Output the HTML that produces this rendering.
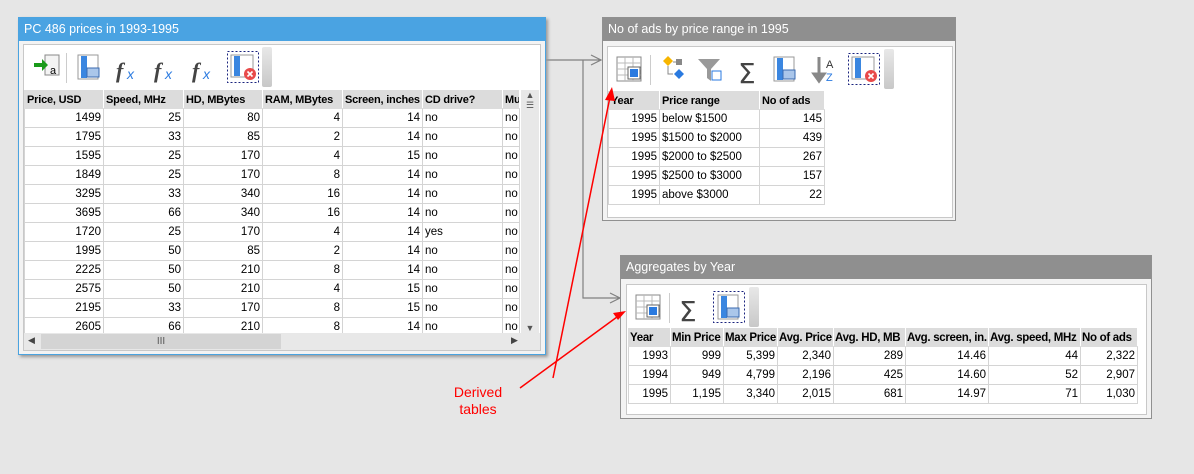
<!DOCTYPE html>
<html><head><meta charset="utf-8"><style>
*{box-sizing:border-box;margin:0;padding:0}
body{width:1194px;height:474px;background:#e6e6e6;font-family:"Liberation Sans",sans-serif;font-size:11.5px;color:#000;position:relative;overflow:hidden}
.abs{position:absolute}
.win{position:absolute;background:#f3f3f3;border:1px solid #a0a0a0}
.title{position:absolute;left:0;right:0;top:0;height:23px;color:#fff;font-size:12.5px;line-height:22px;padding-left:5px}
.inner{position:absolute;background:#fff;border:1px solid #c8c8c8}
table{border-collapse:collapse;position:absolute;table-layout:fixed}
td,th{border:1px solid #d4d4d4;height:19px;padding:0 2px;white-space:nowrap;overflow:hidden;font-weight:normal}
th{background:#dcdcdc;font-weight:bold;text-align:left;height:18px;border-color:#dcdcdc #fff #dcdcdc #dcdcdc;font-size:11px;letter-spacing:-0.2px}
.agg th{font-size:11.5px;letter-spacing:-0.3px;padding:0 1px}
td.r{text-align:right}
.grip{position:absolute;width:10px;background:linear-gradient(#e8e8e8,#c8c8c8);border-radius:2px}
</style></head><body>

<svg class="abs" style="left:0;top:0" width="1194" height="474">
<g stroke="#808080" stroke-width="1.2" fill="none">
<path d="M545 60H601M591 55l10 5-10 5"/>
<path d="M583 60V298H620M610 293l10 5-10 5"/>
</g>
</svg>
<div class="abs" style="left:440px;top:384px;width:76px;text-align:center;color:#ff0000;font-size:14px;line-height:17px">Derived<br>tables</div>

<div class="win" style="left:18px;top:17px;width:528px;height:338px;box-shadow:2px 2px 3px #999;border-color:#4aa3e0">
<div class="title" style="background:#4aa3e2">PC 486 prices in 1993-1995</div>
<div class="inner" style="left:4px;top:26px;width:518px;height:307px">
 <svg class="abs" style="left:8px;top:6px" width="260" height="36">
  <rect x="13" y="4" width="14" height="20" fill="#f4f4f4" stroke="#888"/><text x="18" y="23" font-size="11" font-family="Liberation Sans">a</text>
  <path d="M2 12h8v-4l6 6-6 6v-4H2z" fill="#1a9a1a"/>
  <rect x="34" y="2" width="1" height="30" fill="#ccc"/>
  <rect x="46" y="4" width="20" height="24" fill="#fff" stroke="#999"/><rect x="49" y="5" width="6" height="22" fill="#3a86e0"/><rect x="55" y="17" width="12" height="9" fill="#aac6ea" stroke="#3a6ab0"/>
  <text x="84" y="27" font-size="22" font-style="italic" font-weight="bold" fill="#444" font-family="Liberation Serif">f</text><text x="95" y="28" font-size="14" font-style="italic" fill="#2a7ae0">x</text>
  <text x="122" y="27" font-size="22" font-style="italic" font-weight="bold" fill="#444" font-family="Liberation Serif">f</text><text x="133" y="28" font-size="14" font-style="italic" fill="#2a7ae0">x</text>
  <text x="160" y="27" font-size="22" font-style="italic" font-weight="bold" fill="#444" font-family="Liberation Serif">f</text><text x="171" y="28" font-size="14" font-style="italic" fill="#2a7ae0">x</text>
  <rect x="195.5" y="0.5" width="31" height="31" fill="none" stroke="#1a237e" stroke-dasharray="2,2"/>
  <rect x="199" y="4" width="22" height="22" fill="#fff" stroke="#999"/><rect x="202" y="5" width="6" height="20" fill="#3a86e0"/><circle cx="218" cy="23" r="6" fill="#e84a4a"/><path d="M215.5 20.5l5 5M220.5 20.5l-5 5" stroke="#fff" stroke-width="1.6"/>
 </svg>
 <div class="grip" style="left:238px;top:2px;height:40px"></div>
 <table style="left:0;top:45px;width:495px">
  <colgroup><col style="width:79px"><col style="width:80px"><col style="width:79px"><col style="width:80px"><col style="width:80px"><col style="width:80px"><col style="width:17px"></colgroup>
  <tr><th>Price, USD</th><th>Speed, MHz</th><th>HD, MBytes</th><th>RAM, MBytes</th><th>Screen, inches</th><th>CD drive?</th><th>Mu</th></tr>
  <tr><td class="r">1499</td><td class="r">25</td><td class="r">80</td><td class="r">4</td><td class="r">14</td><td>no</td><td>no</td></tr>
  <tr><td class="r">1795</td><td class="r">33</td><td class="r">85</td><td class="r">2</td><td class="r">14</td><td>no</td><td>no</td></tr>
  <tr><td class="r">1595</td><td class="r">25</td><td class="r">170</td><td class="r">4</td><td class="r">15</td><td>no</td><td>no</td></tr>
  <tr><td class="r">1849</td><td class="r">25</td><td class="r">170</td><td class="r">8</td><td class="r">14</td><td>no</td><td>no</td></tr>
  <tr><td class="r">3295</td><td class="r">33</td><td class="r">340</td><td class="r">16</td><td class="r">14</td><td>no</td><td>no</td></tr>
  <tr><td class="r">3695</td><td class="r">66</td><td class="r">340</td><td class="r">16</td><td class="r">14</td><td>no</td><td>no</td></tr>
  <tr><td class="r">1720</td><td class="r">25</td><td class="r">170</td><td class="r">4</td><td class="r">14</td><td>yes</td><td>no</td></tr>
  <tr><td class="r">1995</td><td class="r">50</td><td class="r">85</td><td class="r">2</td><td class="r">14</td><td>no</td><td>no</td></tr>
  <tr><td class="r">2225</td><td class="r">50</td><td class="r">210</td><td class="r">8</td><td class="r">14</td><td>no</td><td>no</td></tr>
  <tr><td class="r">2575</td><td class="r">50</td><td class="r">210</td><td class="r">4</td><td class="r">15</td><td>no</td><td>no</td></tr>
  <tr><td class="r">2195</td><td class="r">33</td><td class="r">170</td><td class="r">8</td><td class="r">15</td><td>no</td><td>no</td></tr>
  <tr><td class="r">2605</td><td class="r">66</td><td class="r">210</td><td class="r">8</td><td class="r">14</td><td>no</td><td>no</td></tr>
 </table>
 <div class="abs" style="left:497px;top:45px;width:18px;height:243px;background:#e8e8e8"><div style="text-align:center;font-size:9px;color:#555">▲<br>☰</div><div style="position:absolute;bottom:0;width:18px;text-align:center;font-size:9px;color:#555">▼</div></div>
 <div class="abs" style="left:0;top:288px;width:516px;height:17px;background:#e8e8e8">
  <div class="abs" style="left:4px;top:2px;font-size:9px;color:#444">◀</div>
  <div class="abs" style="left:17px;top:1px;width:240px;height:15px;background:#d4d4d4;text-align:center;font-size:10px;color:#555;line-height:15px">III</div>
  <div class="abs" style="left:487px;top:2px;font-size:9px;color:#444">▶</div>
 </div>
</div>
</div>

<div class="win" style="left:602px;top:17px;width:354px;height:204px;border-color:#909090">
<div class="title" style="background:#8f8f8f">No of ads by price range in 1995</div>
<div class="inner" style="left:4px;top:28px;width:346px;height:172px">
 <svg class="abs" style="left:8px;top:6px" width="270" height="36">
  <rect x="1" y="4" width="24" height="24" fill="#fff" stroke="#888"/><path d="M1 10h24M1 16h24M1 22h24M9 4v24M17 4v24" stroke="#bbb"/><rect x="12" y="14" width="12" height="12" fill="#fff" stroke="#666"/><rect x="14" y="16" width="8" height="8" fill="#2a7ae0"/>
  <rect x="34" y="2" width="1" height="30" fill="#ccc"/>
  <path d="M47 8l5-5 5 5-5 5z" fill="#f7b500"/><rect x="60" y="6" width="6" height="6" fill="#888"/><path d="M58 21l5-5 5 5-5 5z" fill="#2a7ae0"/><path d="M52 13v8h5M57 9h3" stroke="#888" fill="none"/>
  <path d="M82 6h22l-9 10v12l-4-3v-9z" fill="#999"/><rect x="96" y="18" width="9" height="9" fill="#fff" stroke="#2a7ae0"/>
  <text x="122" y="30" font-size="28" fill="#444" font-family="DejaVu Sans">Σ</text>
  <rect x="158" y="4" width="20" height="24" fill="#fff" stroke="#999"/><rect x="161" y="5" width="6" height="22" fill="#3a86e0"/><rect x="167" y="17" width="12" height="9" fill="#aac6ea" stroke="#3a6ab0"/>
  <path d="M203 4v22M198 21l5 7 5-7z" stroke="#888" fill="#888" stroke-width="3"/><text x="210" y="15" font-size="11" fill="#333">A</text><text x="210" y="28" font-size="11" fill="#2a7ae0">Z</text>
  <rect x="232.5" y="0.5" width="31" height="31" fill="none" stroke="#1a237e" stroke-dasharray="2,2"/>
  <rect x="236" y="4" width="22" height="22" fill="#fff" stroke="#999"/><rect x="239" y="5" width="6" height="20" fill="#3a86e0"/><circle cx="255" cy="23" r="6" fill="#e84a4a"/><path d="M252.5 20.5l5 5M257.5 20.5l-5 5" stroke="#fff" stroke-width="1.6"/>
 </svg>
 <div class="grip" style="left:276px;top:2px;height:40px"></div>
 <table style="left:0;top:44px;width:216px">
  <colgroup><col style="width:51px"><col style="width:100px"><col style="width:65px"></colgroup>
  <tr><th>Year</th><th>Price range</th><th>No of ads</th></tr>
  <tr><td class="r">1995</td><td>below $1500</td><td class="r">145</td></tr>
  <tr><td class="r">1995</td><td>$1500 to $2000</td><td class="r">439</td></tr>
  <tr><td class="r">1995</td><td>$2000 to $2500</td><td class="r">267</td></tr>
  <tr><td class="r">1995</td><td>$2500 to $3000</td><td class="r">157</td></tr>
  <tr><td class="r">1995</td><td>above $3000</td><td class="r">22</td></tr>
 </table>
</div>
</div>

<div class="win" style="left:620px;top:255px;width:532px;height:164px;border-color:#909090">
<div class="title" style="background:#8f8f8f">Aggregates by Year</div>
<div class="inner" style="left:5px;top:28px;width:521px;height:131px">
 <svg class="abs" style="left:8px;top:6px" width="140" height="36">
  <rect x="1" y="4" width="24" height="24" fill="#fff" stroke="#888"/><path d="M1 10h24M1 16h24M1 22h24M9 4v24M17 4v24" stroke="#bbb"/><rect x="12" y="14" width="12" height="12" fill="#fff" stroke="#666"/><rect x="14" y="16" width="8" height="8" fill="#2a7ae0"/>
  <rect x="34" y="2" width="1" height="30" fill="#ccc"/>
  <text x="44" y="30" font-size="28" fill="#444" font-family="DejaVu Sans">Σ</text>
  <rect x="78.5" y="0.5" width="31" height="31" fill="none" stroke="#1a237e" stroke-dasharray="2,2"/>
  <rect x="83" y="4" width="20" height="24" fill="#fff" stroke="#999"/><rect x="86" y="5" width="6" height="22" fill="#3a86e0"/><rect x="92" y="17" width="12" height="9" fill="#aac6ea" stroke="#3a6ab0"/>
 </svg>
 <div class="grip" style="left:122px;top:2px;height:40px"></div>
 <table class="agg" style="left:1px;top:43px;width:509px">
  <colgroup><col style="width:42px"><col style="width:53px"><col style="width:54px"><col style="width:56px"><col style="width:72px"><col style="width:83px"><col style="width:92px"><col style="width:57px"></colgroup>
  <tr><th>Year</th><th>Min Price</th><th>Max Price</th><th>Avg. Price</th><th>Avg. HD, MB</th><th>Avg. screen, in.</th><th>Avg. speed, MHz</th><th>No of ads</th></tr>
  <tr><td class="r">1993</td><td class="r">999</td><td class="r">5,399</td><td class="r">2,340</td><td class="r">289</td><td class="r">14.46</td><td class="r">44</td><td class="r">2,322</td></tr>
  <tr><td class="r">1994</td><td class="r">949</td><td class="r">4,799</td><td class="r">2,196</td><td class="r">425</td><td class="r">14.60</td><td class="r">52</td><td class="r">2,907</td></tr>
  <tr><td class="r">1995</td><td class="r">1,195</td><td class="r">3,340</td><td class="r">2,015</td><td class="r">681</td><td class="r">14.97</td><td class="r">71</td><td class="r">1,030</td></tr>
 </table>
</div>
</div>

<svg class="abs" style="left:0;top:0;z-index:10" width="1194" height="474">
<g stroke="#ff0000" stroke-width="1.5" fill="none">
<path d="M553 378L610 97"/>
<path d="M520 388L617 317"/>
</g>
<path d="M612 87l-7 13 10 1z" fill="#ff0000"/>
<path d="M626 311l-13 2 5 7z" fill="#ff0000"/>
</svg>
</body></html>
